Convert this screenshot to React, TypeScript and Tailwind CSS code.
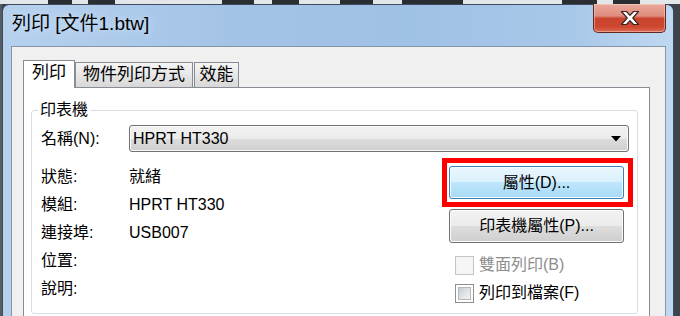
import React from 'react';

const grayBtn =
    'border border-[#707070] rounded-[3px] bg-[linear-gradient(to_bottom,#f2f2f2_0%,#ebebeb_50%,#dddddd_50%,#cfcfcf_100%)] shadow-[inset_0_0_0_1px_#fbfbfb]';

const topSegments: [number, number][] = [
    [48, 24],
    [88, 27],
    [222, 32],
    [272, 27],
    [340, 33],
    [402, 61],
    [562, 35],
    [613, 27],
];

function TopStrip() {
    return (
        <div className="h-[4px] shrink-0 flex bg-[#e4e7ea]">
            {topSegments.map(([left, width], i) => {
                const prev = i === 0 ? 0 : topSegments[i - 1][0] + topSegments[i - 1][1];
                return (
                    <React.Fragment key={i}>
                        <div style={{ width: left - prev }} />
                        <div className="bg-[#2a2d31]" style={{ width }} />
                    </React.Fragment>
                );
            })}
        </div>
    );
}

function CloseButton() {
    return (
        <div className="-mt-px w-[73px] h-[29px] shrink-0 flex items-center justify-center rounded-b-[5px] border border-t-0 border-[#5e2b23] bg-[linear-gradient(to_bottom,#eaa99b_0%,#df8c7d_42%,#c9432d_52%,#cd4830_82%,#de6c55_100%)] shadow-[inset_0_0_0_1px_rgba(255,220,210,0.45)]">
            <svg width="20" height="16" viewBox="0 0 20 16">
                <polygon
                    points="1.5,1.5 6.5,1.5 10,5.3 13.5,1.5 18.5,1.5 12.8,8 18.5,14.5 13.5,14.5 10,10.7 6.5,14.5 1.5,14.5 7.2,8"
                    fill="#ffffff"
                    stroke="#3b2624"
                    strokeWidth="1.2"
                    strokeLinejoin="round"
                />
            </svg>
        </div>
    );
}

function InfoRow({ label, value }: { label: string; value?: string }) {
    return (
        <div className="h-[28px] flex items-center">
            <span className="w-[88px] shrink-0">{label}</span>
            {value && <span>{value}</span>}
        </div>
    );
}

function CheckRow({ label, disabled }: { label: string; disabled?: boolean }) {
    return (
        <div className="h-[28px] flex items-center pl-[13px]">
            {disabled ? (
                <div className="w-[19px] h-[19px] border border-[#c4c4c4] bg-[#f4f4f4] p-[2px]">
                    <div className="w-full h-full bg-[#f6f6f6]" />
                </div>
            ) : (
                <div className="w-[19px] h-[19px] border border-[#8e8f8f] bg-white p-[2px]">
                    <div className="w-full h-full border border-[#b4b8bd] bg-[linear-gradient(135deg,#c9cdd2_0%,#e4e6e8_60%,#f4f4f5_100%)]" />
                </div>
            )}
            <span className={disabled ? 'ml-[5px] text-[#8d8d8d]' : 'ml-[5px]'}>{label}</span>
        </div>
    );
}

export default function App() {
    return (
        <div className="w-[680px] h-[316px] overflow-hidden flex flex-col bg-[#3c434b] text-black text-[16px] leading-[20px] font-['Liberation_Sans','Noto_Sans_CJK_TC',sans-serif]">
            <TopStrip />
            <div className="flex flex-1 min-h-0">
                <div className="w-[2px] shrink-0 bg-[#555c64]" />
                <div className="w-[672px] shrink-0 flex flex-col rounded-t-[7px] border border-b-0 border-[#3d4d5e] bg-[linear-gradient(to_right,#b6d1ee_0%,#a3c3e6_35%,#9fc1e5_60%,#a8c8e9_85%,#c0d8f1_100%)]">
                    {/* title bar */}
                    <div className="h-[41px] shrink-0 flex items-start justify-between pl-[9px] pr-[7px]">
                        <div className="pt-[8px] text-[19px] leading-[22px] [text-shadow:0_0_6px_#dcebf9]">
                            列印 [文件1.btw]
                        </div>
                        <CloseButton />
                    </div>

                    {/* client area */}
                    <div className="ml-[8px] mr-[7px] flex-1 flex flex-col border border-b-0 border-[#8796a6] bg-[#f0f0f0] pt-[13px] pl-[11px] pr-[15px]">
                        <div className="h-[27px] shrink-0 flex items-end text-[17px]">
                            <div className="relative z-10 -mb-px h-[28px] w-[52px] flex justify-center pt-[2px] bg-white border border-b-0 border-[#898c95]">
                                列印
                            </div>
                            <div className="h-[25px] w-[118px] flex items-center justify-center pb-[1px] border border-b-0 border-[#898c95] bg-[linear-gradient(to_bottom,#f5f5f5,#d8d8d8)]">
                                物件列印方式
                            </div>
                            <div className="ml-[1px] h-[25px] w-[45px] flex items-center justify-center pb-[1px] border border-b-0 border-[#898c95] bg-[linear-gradient(to_bottom,#f5f5f5,#d8d8d8)]">
                                效能
                            </div>
                        </div>

                        <div className="flex-1 bg-white border border-b-0 border-[#898c95] pl-[7px] pr-[11px] pt-[12px]">
                            <fieldset className="border border-[#d5dfe5] rounded-[3px] pb-[6px]">
                                <legend className="ml-[6px] px-[2px]">印表機</legend>

                                <div className="mt-[5px] flex items-center pl-[9px] pr-[8px]">
                                    <span className="w-[88px] shrink-0">名稱(N):</span>
                                    <div className={`flex-1 h-[27px] flex items-center justify-between pl-[3px] pr-[7px] ${grayBtn}`}>
                                        <span>HPRT HT330</span>
                                        <svg width="10" height="6" viewBox="0 0 10 6">
                                            <polygon points="0,0 10,0 5,5.5" fill="#000" />
                                        </svg>
                                    </div>
                                </div>

                                <div className="flex justify-between pr-[4px]">
                                    <div className="mt-[11px] pl-[9px] flex flex-col">
                                        <InfoRow label="狀態:" value="就緒" />
                                        <InfoRow label="模組:" value="HPRT HT330" />
                                        <InfoRow label="連接埠:" value="USB007" />
                                        <InfoRow label="位置:" />
                                        <InfoRow label="說明:" />
                                    </div>

                                    <div className="mt-[6px] w-[191px] flex flex-col">
                                        <div className="border-[5px] border-[#ff0000] pt-[3px] pb-[3px] pl-[2px] pr-[4px]">
                                            <div className="h-[33px] flex items-center justify-center rounded-[3px] border border-[#3c7fb1] bg-[linear-gradient(to_bottom,#eaf6fd_0%,#d9f0fc_50%,#bee6fd_50%,#a7d9f5_100%)] shadow-[inset_0_0_0_1px_#f4fbfe]">
                                                屬性(D)...
                                            </div>
                                        </div>
                                        <div className={`mt-[2px] ml-[7px] w-[175px] h-[34px] flex items-center justify-center ${grayBtn}`}>
                                            印表機屬性(P)...
                                        </div>
                                        <div className="mt-[8px] flex flex-col">
                                            <CheckRow label="雙面列印(B)" disabled />
                                            <CheckRow label="列印到檔案(F)" />
                                        </div>
                                    </div>
                                </div>
                            </fieldset>
                        </div>
                    </div>
                </div>
            </div>
        </div>
    );
}
